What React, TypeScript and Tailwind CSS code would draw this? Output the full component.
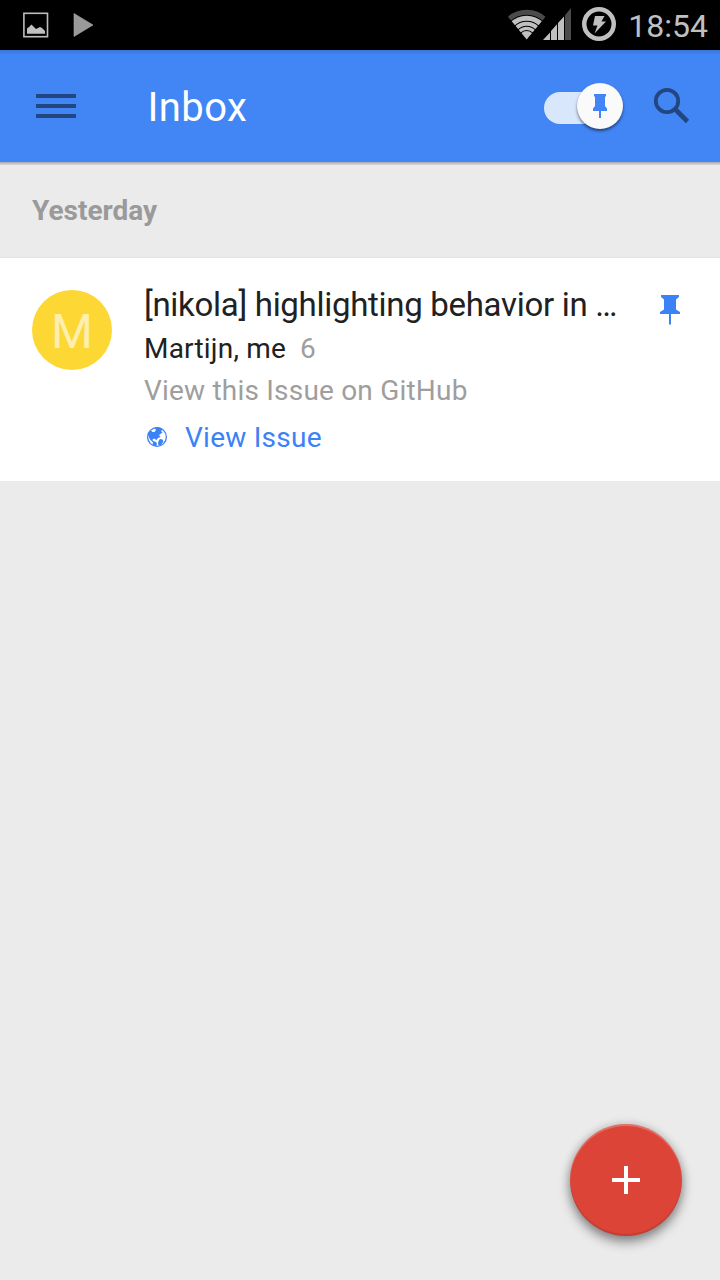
import React from "react";

function StatusBar() {
  return (
    <div className="flex h-[50px] shrink-0 items-center bg-black pr-[12px] pl-[22px]">
      <svg className="h-[50px] w-[28px]" viewBox="22 0 28 50">
        <rect x="23.900" y="13.300" width="23.600" height="23.400" fill="none" stroke="#bdbdbd" strokeWidth="1.600" />
        <path d="M27 33.700V28.500L29 27L31.500 24.500L36 29L40 27L42 28L45 31V33.700Z" fill="#c0c0c0" />
      </svg>
      <svg className="ml-[23px] h-[50px] w-[22px]" viewBox="73 0 22 50">
        <path d="M74 13.500L93 25L74 36.500Z" fill="#999" stroke="#aaa" strokeWidth="0.6" />
      </svg>
      <svg className="ml-auto h-[50px] w-[110px]" viewBox="507 0 110 50">
        <clipPath id="wifi-wedge">
          <path d="M526.700 39.500L506.500 15V5H547V15Z" />
        </clipPath>
        <g clipPath="url(#wifi-wedge)" fill="none" stroke="#c0c0c0">
          <circle cx="526.700" cy="38.800" r="26.600" stroke="#4b4b4b" strokeWidth="5" />
          <circle cx="526.700" cy="38.800" r="20.500" strokeWidth="5" />
          <circle cx="526.700" cy="38.800" r="15" strokeWidth="4" />
          <circle cx="526.700" cy="38.800" r="10.400" strokeWidth="3.300" />
          <circle cx="526.700" cy="38.800" r="7.700" fill="#c0c0c0" stroke="none" />
        </g>
        <path d="M543 40L550 32.500V40ZM551 40V31L557 24.300V40ZM558 40V23L564 16.500V40Z" fill="#c0c0c0" />
        <path d="M565 40V15.300L571 8V40Z" fill="#4b4b4b" />
        <circle cx="599" cy="24" r="14.750" fill="none" stroke="#c0c0c0" strokeWidth="4.500" />
        <path d="M595 16H604.500L601.500 21.500H606L594.500 33.500L597.500 25.500H593Z" fill="#c0c0c0" />
      </svg>
      <span className="ml-[11px] pt-[2px] text-[32px] leading-[50px] whitespace-nowrap text-[#c0c0c0]">18:54</span>
    </div>
  );
}

function PinToggle() {
  return (
    <div className="flex w-[80px] items-center pt-[2px]">
      <div className="mt-[2px] h-[32px] w-[56px] shrink-0 rounded-full bg-[#d9e7fd]" />
      <div className="-ml-[23px] mt-[-2px] flex size-[46px] shrink-0 items-center justify-center rounded-full bg-[#fafafa] shadow-[0_2px_3px_rgba(0,0,0,0.5)]">
        <svg className="h-[24px] w-[14px]" viewBox="0 0 14 24" fill="#4285f4">
          <path d="M1 0H13V2L12 3V12L14 14.500V17H8V24H6V17H0V14.500L2 12V3L1 2Z" />
        </svg>
      </div>
    </div>
  );
}

function AppBar() {
  return (
    <header className="flex h-[112px] shrink-0 items-center bg-linear-to-b from-[#3a76da] to-[#4285f4] to-[5px] pr-[28px] pl-[36px]">
      <div className="flex w-[40px] flex-col gap-[6px]">
        <div className="h-[4px] bg-[#22467f]" />
        <div className="h-[4px] bg-[#22467f]" />
        <div className="h-[4px] bg-[#22467f]" />
      </div>
      <h1 className="ml-[71.5px] pt-[3px] text-[40px] leading-[48px] font-normal tracking-[0.4px] whitespace-nowrap text-white">Inbox</h1>
      <div className="ml-auto">
        <PinToggle />
      </div>
      <svg className="ml-[28px] h-[40px] w-[40px]" viewBox="652 86 40 40">
        <circle cx="667" cy="101" r="11.200" fill="none" stroke="#22467f" strokeWidth="3.800" />
        <path d="M674.500 108.500L687.500 121.500" stroke="#22467f" strokeWidth="4.600" />
      </svg>
    </header>
  );
}

function Conversation() {
  return (
    <article className="flex h-[223px] shrink-0 items-start bg-white pl-[32px]">
      <div className="mt-[32px] flex size-[80px] shrink-0 items-center justify-center rounded-full bg-[#fdd835] pt-[3px] text-[48px] leading-[48px] text-[#feefae]">
        M
      </div>
      <div className="ml-[32px] flex flex-col pt-[24px] whitespace-nowrap">
        <h2 className="text-[33px] leading-[46px] font-normal tracking-[-0.3px] text-[#212121]">[nikola] highlighting behavior in …</h2>
        <p className="text-[28px] leading-[41px] tracking-[0.2px] text-[#212121]">
          Martijn, me<span className="ml-[14px] text-[#9e9e9e]">6</span>
        </p>
        <p className="text-[28px] leading-[43px] tracking-[0.2px] text-[#9e9e9e]">View this Issue on GitHub</p>
        <div className="flex items-center text-[28px] leading-[51px] text-[#3b82f6]">
          <svg className="-mt-[2px] ml-[2px] h-[22px] w-[22px]" viewBox="0 0 22 22">
            <circle cx="11" cy="11" r="9.400" fill="none" stroke="#3b82f6" strokeWidth="1.300" />
            <path d="M1.500 8L3.500 5L5 4.500L6.500 6L8.500 6L10 4L8.500 1.500L13 1.200L17 3L15 5L16.500 6.500L13 9L14.500 11L12 12L10.500 14L8 12.500L6.500 13.500L7 15L10 16L11 18L10 20.500L6.500 19L7 16.500L4 13.500L2.500 10ZM14 13L16.500 13.500L17.500 15.500L15 19L13 20L12 17.500L12.500 15Z" fill="#3b82f6" />
          </svg>
          <span className="ml-[17px] tracking-[0.25px]">View Issue</span>
        </div>
      </div>
      <svg className="mt-[37px] mr-[39px] ml-auto h-[30px] w-[22px] shrink-0" viewBox="0 0 22 30" fill="#3b82f6">
        <path d="M2 0H20V2L17 4.500V14.500L21 17V19H12V29L11 30L10 29V19H1V17L5 14.500V4.500L2 2Z" />
      </svg>
    </article>
  );
}

export default function App() {
  return (
    <div className="flex h-[1280px] w-[720px] flex-col overflow-hidden bg-[#ebebeb] font-['Roboto',sans-serif]">
      <StatusBar />
      <AppBar />
      <div className="h-[3px] shrink-0 bg-linear-to-b from-[#a5a8ae] to-[#dcdcdc]" />
      <div className="flex h-[93px] shrink-0 items-center border-b border-[#e2e2e2] px-[32px] text-[28px] leading-[40px] font-bold text-[#9a9a9a]">
        Yesterday
      </div>
      <Conversation />
      <button className="mt-auto mr-[38px] mb-[44px] flex size-[112px] shrink-0 items-center justify-center self-end rounded-full bg-[#db4437] shadow-[0_6px_12px_rgba(0,0,0,0.42),0_0_10px_rgba(0,0,0,0.14),inset_0_2px_1px_rgba(255,255,255,0.25),inset_0_-2px_1px_rgba(0,0,0,0.1)]">
        <svg className="size-[28px]" viewBox="0 0 28 28" fill="white">
          <path d="M12 0H16V12H28V16H16V28H12V16H0V12H12Z" />
        </svg>
      </button>
    </div>
  );
}
